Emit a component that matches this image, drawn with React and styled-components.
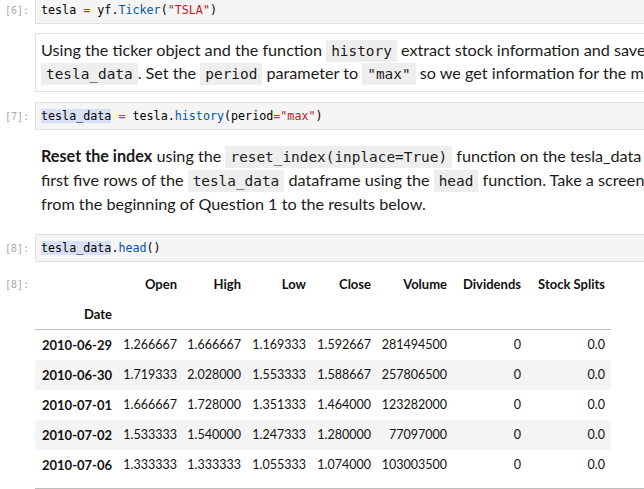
import React from "react";
import styled, { createGlobalStyle } from "styled-components";

const GlobalStyle = createGlobalStyle`
  body {
    margin: 0;
    background: #ffffff;
    overflow: hidden;
    color: rgba(0, 0, 0, 0.87);
  }
`;

const Notebook = styled.main`
  width: 1100px;
  display: flex;
  flex-direction: column;
`;

const Cell = styled.section`
  display: grid;
  grid-template-columns: 35px 1fr;
  align-items: start;
  margin-top: ${(p) => p.$gap}px;
`;

const Prompt = styled.div`
  padding-left: 5px;
  height: ${(p) => p.$h}px;
  display: flex;
  align-items: center;
  font-family: "DejaVu Sans Mono", monospace;
  font-size: 10px;
  color: #a8a8a8;
`;

const CodeBox = styled.pre`
  margin: 0;
  height: 28px;
  box-sizing: border-box;
  display: flex;
  align-items: center;
  padding: 0 5px;
  background: #f5f5f5;
  border: 1px solid #e0e0e0;
  font-family: "DejaVu Sans Mono", monospace;
  font-size: 11.7px;
  color: #000;
`;

const Tok = styled.span`
  color: ${(p) =>
    p.$k === "op" ? "#aa22ff" : p.$k === "str" ? "#ba2121" : p.$k === "prop" ? "#0055aa" : "#000"};
  background: ${(p) => (p.$hl ? "#d9e0f6" : "transparent")};
`;

const Markdown = styled.div`
  font-family: Lato, "Open Sans", sans-serif;
  font-size: 16.2px;
  line-height: ${(p) => p.$lh}px;
  white-space: nowrap;
  color: #1a1a1a;
  padding: ${(p) => (p.$boxed ? "4px 5px 7px" : "3px 5px 8px")};
  border: ${(p) => (p.$boxed ? "1px solid #e0e0e0" : "1px solid transparent")};
  strong {
    font-weight: 700;
  }
`;

const InlineCode = styled.code`
  font-family: "DejaVu Sans Mono", monospace;
  font-size: 14.4px;
  line-height: 14px;
  background: #eeeeee;
  padding: 3px 5px;
  color: #1a1a1a;
`;

const Table = styled.table`
  border-collapse: collapse;
  font-family: Lato, "Open Sans", sans-serif;
  font-size: 12.5px;
  color: #111;
  thead tr:last-child th {
    border-bottom: 1px solid #bdbdbd;
  }
  tbody tr:nth-child(even) {
    background: #f4f4f4;
  }
`;

const Th = styled.th`
  width: ${(p) => p.$w}px;
  box-sizing: border-box;
  height: 30px;
  padding: 0 6px 0 0;
  text-align: right;
  font-size: 13px;
  font-weight: 700;
  color: #111;
`;

const Td = styled.td`
  height: 30px;
  padding: 0 6px 0 0;
  text-align: right;
`;

const BottomLine = styled.div`
  margin-top: 8px;
  height: 1px;
  background: #bdbdbd;
`;

const widths = [83, 65, 64, 65, 65, 76, 74, 84];
const cols = ["Open", "High", "Low", "Close", "Volume", "Dividends", "Stock Splits"];
const rows = [
  ["2010-06-29", "1.266667", "1.666667", "1.169333", "1.592667", "281494500", "0", "0.0"],
  ["2010-06-30", "1.719333", "2.028000", "1.553333", "1.588667", "257806500", "0", "0.0"],
  ["2010-07-01", "1.666667", "1.728000", "1.351333", "1.464000", "123282000", "0", "0.0"],
  ["2010-07-02", "1.533333", "1.540000", "1.247333", "1.280000", "77097000", "0", "0.0"],
  ["2010-07-06", "1.333333", "1.333333", "1.055333", "1.074000", "103003500", "0", "0.0"],
];

export default function App() {
  return (
    <>
      <GlobalStyle />
      <Notebook>
        <Cell $gap={-4}>
          <Prompt $h={28}>[6]:</Prompt>
          <CodeBox>
            <Tok>tesla </Tok>
            <Tok $k="op">=</Tok>
            <Tok> yf.</Tok>
            <Tok $k="prop">Ticker</Tok>
            <Tok>(</Tok>
            <Tok $k="str">"TSLA"</Tok>
            <Tok>)</Tok>
          </CodeBox>
        </Cell>

        <Cell $gap={9}>
          <div />
          <Markdown $boxed $lh={23}>
            Using the ticker object and the function <InlineCode>history</InlineCode> extract stock
            information and save it in a dataframe named
            <br />
            <InlineCode>tesla_data</InlineCode>. Set the <InlineCode>period</InlineCode> parameter to{" "}
            <InlineCode>"max"</InlineCode> so we get information for the maximum amount of time.
          </Markdown>
        </Cell>

        <Cell $gap={10}>
          <Prompt $h={28}>[7]:</Prompt>
          <CodeBox>
            <Tok $hl>tesla_data</Tok>
            <Tok> </Tok>
            <Tok $k="op">=</Tok>
            <Tok> tesla.</Tok>
            <Tok $k="prop">history</Tok>
            <Tok>(period</Tok>
            <Tok $k="op">=</Tok>
            <Tok $k="str">"max"</Tok>
            <Tok>)</Tok>
          </CodeBox>
        </Cell>

        <Cell $gap={10}>
          <div />
          <Markdown $lh={24}>
            <strong>Reset the index</strong> using the <InlineCode>reset_index(inplace=True)</InlineCode>{" "}
            function on the tesla_data DataFrame and display the
            <br />
            first five rows of the <InlineCode>tesla_data</InlineCode> dataframe using the{" "}
            <InlineCode>head</InlineCode> function. Take a screenshot of the results and code
            <br />
            from the beginning of Question 1 to the results below.
          </Markdown>
        </Cell>

        <Cell $gap={9}>
          <Prompt $h={28}>[8]:</Prompt>
          <CodeBox>
            <Tok $hl>tesla_data</Tok>
            <Tok>.</Tok>
            <Tok $k="prop">head</Tok>
            <Tok>()</Tok>
          </CodeBox>
        </Cell>

        <Cell $gap={7}>
          <Prompt $h={30}>[8]:</Prompt>
          <div>
            <Table>
              <thead>
                <tr>
                  <Th $w={widths[0]} />
                  {cols.map((c, i) => (
                    <Th key={c} $w={widths[i + 1]}>
                      {c}
                    </Th>
                  ))}
                </tr>
                <tr>
                  <Th $w={widths[0]}>Date</Th>
                  {cols.map((c, i) => (
                    <Th key={c} $w={widths[i + 1]} />
                  ))}
                </tr>
              </thead>
              <tbody>
                {rows.map((r) => (
                  <tr key={r[0]}>
                    <Th $w={widths[0]}>{r[0]}</Th>
                    {r.slice(1).map((v, i) => (
                      <Td key={i}>{v}</Td>
                    ))}
                  </tr>
                ))}
              </tbody>
            </Table>
            <BottomLine />
          </div>
        </Cell>
      </Notebook>
    </>
  );
}
